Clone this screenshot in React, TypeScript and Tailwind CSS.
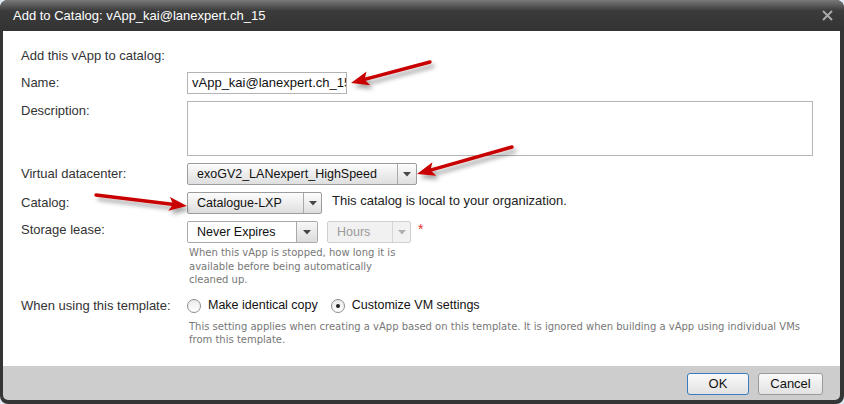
import React from "react";

type Pt = [number, number];

// red annotation arrow, drawn from tail to tip
function Arrow({ tail, tip }: { tail: Pt; tip: Pt }) {
  const dx = tip[0] - tail[0];
  const dy = tip[1] - tail[1];
  const len = Math.hypot(dx, dy);
  const ux = dx / len;
  const uy = dy / len;
  const px = -uy;
  const py = ux;
  const headLen = 18;
  const half = 7;
  const bx = tip[0] - ux * headLen;
  const by = tip[1] - uy * headLen;
  const head = `${tip[0]},${tip[1]} ${bx + px * half},${by + py * half} ${bx + ux * 4},${by + uy * 4} ${bx - px * half},${by - py * half}`;
  return (
    <g filter="url(#shadow)">
      <line x1={tail[0]} y1={tail[1]} x2={bx + ux * 3} y2={by + uy * 3} stroke="#c80000" strokeWidth={3.4} strokeLinecap="round" />
      <polygon points={head} fill="#c80000" />
    </g>
  );
}

function Caret({ disabled }: { disabled?: boolean }) {
  return (
    <svg width="8" height="5" viewBox="0 0 8 5">
      <path d="M0 0 L8 0 L4 4.5 Z" fill={disabled ? "#b0b0b0" : "#474747"} />
    </svg>
  );
}

interface SelectProps {
  text: string;
  width: string;
  caretWidth: string;
  variant?: "button" | "field" | "disabled";
}

function Select({ text, width, caretWidth, variant = "button" }: SelectProps) {
  const body =
    variant === "button"
      ? "bg-gradient-to-b from-[#fdfdfd] to-[#dedede] border-[#9c9c9c] text-[#111]"
      : variant === "field"
        ? "bg-white border-[#a9a9a9] text-[#111]"
        : "bg-[#f1f1f1] border-[#cfcfcf] text-[#9a9a9a]";
  const caretBox =
    variant === "disabled"
      ? "border-[#d6d6d6]"
      : variant === "field"
        ? "bg-gradient-to-b from-[#f7f7f7] to-[#dcdcdc] border-[#a9a9a9]"
        : "border-[#a9a9a9]";
  return (
    <div className={`flex h-[22px] shrink-0 items-stretch rounded-[2px] border ${body} ${width}`}>
      <div className="flex flex-1 items-center pl-[9px] text-[12.5px] leading-none">{text}</div>
      <div className={`flex items-center justify-center border-l ${caretBox} ${caretWidth}`}>
        <Caret disabled={variant === "disabled"} />
      </div>
    </div>
  );
}

function Radio({ checked }: { checked?: boolean }) {
  return (
    <span className="flex h-[14px] w-[14px] shrink-0 items-center justify-center rounded-full border border-[#8d8d8d] bg-gradient-to-b from-[#eaeaea] to-[#ffffff]">
      {checked && <span className="h-[4px] w-[4px] rounded-full bg-[#222]" />}
    </span>
  );
}

export default function App() {
  const sans = "font-['Liberation_Sans',Arial,sans-serif]";
  const small = "font-['DejaVu_Sans',Verdana,sans-serif] text-[10px] leading-[13.5px] text-[#777]";

  return (
    <div className="relative h-[404px] w-[844px] overflow-hidden bg-[#dfe8f2]">
      <div className={`flex h-[404px] w-[844px] flex-col rounded-[8px] bg-[#353535] ${sans}`}>
        {/* title bar */}
        <div className="flex h-[31px] shrink-0 items-center justify-between rounded-t-[8px] bg-gradient-to-b from-[#7a7a7a] via-[#3b3b3b] via-35% to-[#333] pl-[13px] pr-[11px]">
          <span className="text-[13px] text-white">Add to Catalog: vApp_kai@lanexpert.ch_15</span>
          <svg width="11" height="11" viewBox="0 0 11 11">
            <path d="M1 1 L10 10 M10 1 L1 10" stroke="#a9a9a9" strokeWidth="2" />
          </svg>
        </div>

        <div className="mb-[4px] ml-[3px] mr-[4px] flex flex-1 flex-col overflow-hidden rounded-b-[5px]">
          {/* form body */}
          <div className="flex-1 bg-white pl-[18px] pt-[17px] text-[13px] text-[#333]">
            <div className="h-[16px] leading-[16px]">Add this vApp to catalog:</div>

            <div className="mt-[8px] flex items-center">
              <div className="w-[166px] shrink-0">Name:</div>
              <div className="flex h-[22px] w-[160px] items-center overflow-hidden whitespace-nowrap border border-[#b3b3b3] pl-[4px] text-[13px] text-[#111]">
                vApp_kai@lanexpert.ch_15
              </div>
            </div>

            <div className="mt-[7px] flex items-start">
              <div className="w-[166px] shrink-0 pt-[2px] leading-[16px]">Description:</div>
              <div className="h-[55px] w-[626px] border border-[#b3b3b3]" />
            </div>

            <div className="mt-[7px] flex items-center">
              <div className="w-[166px] shrink-0">Virtual datacenter:</div>
              <Select text="exoGV2_LANexpert_HighSpeed" width="w-[230px]" caretWidth="w-[19px]" />
            </div>

            <div className="mt-[7px] flex items-center">
              <div className="w-[166px] shrink-0">Catalog:</div>
              <Select text="Catalogue-LXP" width="w-[135px]" caretWidth="w-[18px]" />
              <span className="ml-[10px] -translate-y-[2px] text-[#222]">This catalog is local to your organization.</span>
            </div>

            <div className="mt-[7px] flex items-start">
              <div className="w-[166px] shrink-0 pt-[1px] leading-[16px]">Storage lease:</div>
              <div className="flex flex-col">
                <div className="flex items-start">
                  <Select text="Never Expires" width="w-[131px]" caretWidth="w-[21px]" variant="field" />
                  <div className="ml-[9px]">
                    <Select text="Hours" width="w-[84px]" caretWidth="w-[18px]" variant="disabled" />
                  </div>
                  <span className="ml-[7px] mt-[1px] text-[14px] leading-[14px] text-[#e03030]">*</span>
                </div>
                <div className={`mt-[3px] w-[220px] pl-[2px] ${small}`}>
                  When this vApp is stopped, how long it is available before being automatically cleaned up.
                </div>
              </div>
            </div>

            <div className="mt-[10px] flex items-start">
              <div className="w-[166px] shrink-0 pt-[1px] leading-[16px]">When using this template:</div>
              <div className="flex flex-col">
                <div className="flex h-[18px] items-center text-[12.5px] text-[#111]">
                  <Radio />
                  <span className="ml-[7px]">Make identical copy</span>
                  <span className="ml-[13px]">
                    <Radio checked />
                  </span>
                  <span className="ml-[7px]">Customize VM settings</span>
                </div>
                <div className={`mt-[5px] w-[620px] pl-[2px] ${small}`}>
                  This setting applies when creating a vApp based on this template. It is ignored when building a vApp using individual VMs from this template.
                </div>
              </div>
            </div>
          </div>

          {/* footer */}
          <div className="flex h-[34px] shrink-0 items-start justify-end gap-[9px] bg-[#cdcdcd] pr-[17px] pt-[7px]">
            <button className="h-[22px] w-[62px] rounded-[3px] border border-[#3a7cc0] bg-gradient-to-b from-[#fafafa] to-[#e2e2e2] text-[13px] text-[#111]">
              OK
            </button>
            <button className="h-[22px] w-[65px] rounded-[3px] border border-[#9a9a9a] bg-gradient-to-b from-[#fafafa] to-[#e2e2e2] text-[13px] text-[#111]">
              Cancel
            </button>
          </div>
        </div>
      </div>

      {/* annotation arrows lie over the dialog */}
      <svg className="pointer-events-none absolute inset-0" width="844" height="404" viewBox="0 0 844 404">
        <defs>
          <filter id="shadow" x="-20%" y="-50%" width="140%" height="200%">
            <feDropShadow dx="3" dy="4" stdDeviation="2" floodColor="#000" floodOpacity="0.35" />
          </filter>
        </defs>
        <Arrow tail={[430, 62]} tip={[351, 83]} />
        <Arrow tail={[512, 147]} tip={[417, 174]} />
        <Arrow tail={[96, 195]} tip={[187, 206]} />
      </svg>
    </div>
  );
}
